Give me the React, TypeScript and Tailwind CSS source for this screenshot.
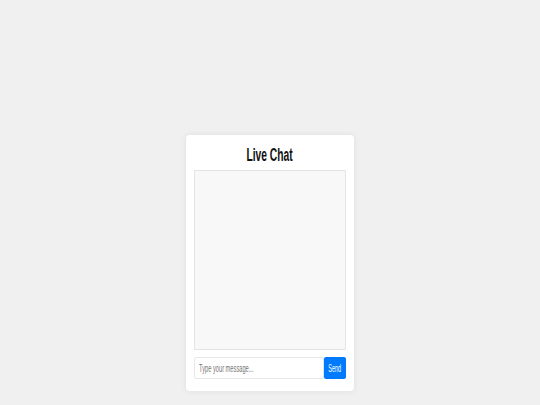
import React from "react";

export default function App() {
  return (
    <div className="min-h-[405px] w-full bg-[#f0f0f0] pt-[135px] flex justify-center" style={{ fontFamily: '"Liberation Sans", Arial, sans-serif' }}>
      <div className="w-[168px] h-[256px] bg-white rounded-[4px] shadow-[0_0_6px_rgba(0,0,0,0.08)] px-[8px] flex flex-col">
        <div className="h-[35px] flex items-center justify-center">
          <h1 className="text-[18px] font-bold text-[#111] leading-none scale-x-[0.57] whitespace-nowrap mt-[5px]">Live Chat</h1>
        </div>
        <div className="h-[180px] w-full border border-[#e4e4e4] bg-[#f8f8f8]" />
        <div className="mt-[7px] h-[22px] flex">
          <div className="flex-1 border border-[#e8e8e8] rounded-l-[2px] flex items-center pl-[4px] overflow-hidden">
            <span className="text-[10px] text-[#757575] whitespace-nowrap origin-left scale-x-[0.57] inline-block">Type your message...</span>
          </div>
          <button className="w-[22px] h-full bg-[#007bff] rounded-[2px] flex items-center justify-center overflow-hidden">
            <span className="text-[10px] text-white whitespace-nowrap scale-x-[0.55] inline-block">Send</span>
          </button>
        </div>
      </div>
    </div>
  );
}
